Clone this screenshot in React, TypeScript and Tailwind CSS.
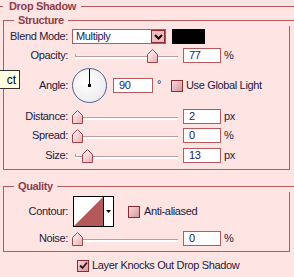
import React from 'react';

const line = 'border-[#b65a5e]';

const Thumb: React.FC = () => (
  <svg width="11" height="14" viewBox="0 0 11 14">
    <defs>
      <linearGradient id="tg" x1="0" y1="0" x2="1" y2="1">
        <stop offset="0" stopColor="#ffffff" />
        <stop offset="1" stopColor="#e9a9ad" />
      </linearGradient>
    </defs>
    <polygon points="0.5,5.5 5.5,0.5 10.5,5.5 10.5,13.5 0.5,13.5" fill="url(#tg)" stroke="#a3434b" />
  </svg>
);

const Slider: React.FC<{ pos: number }> = ({ pos }) => (
  <div className="relative w-[106px] h-[15px]">
    <div className="absolute left-[3px] right-0 top-[8px] h-[3px] border-t border-[#c29a9c] bg-white" />
    <div className="absolute left-[3px] top-[6px] w-[1px] h-[3px] bg-[#c29a9c]" />
    <div className="absolute top-[1px]" style={{ left: pos }}>
      <Thumb />
    </div>
  </div>
);

const NumBox: React.FC<{ value: string; w?: string }> = ({ value, w = 'w-[38px]' }) => (
  <div className={`${w} h-[15px] border ${line} bg-white pl-[5px] text-[#1a2166] leading-[13px]`}>{value}</div>
);

const Check: React.FC<{ checked?: boolean }> = ({ checked }) => (
  <div className="w-[12px] h-[12px] border border-[#8e2a32] bg-gradient-to-br from-[#f6dadd] to-[#d8959b] flex items-center justify-center">
    {checked && (
      <svg width="9" height="9" viewBox="0 0 9 9">
        <path d="M1 4.5 L3.5 7 L8 1.5" fill="none" stroke="#2a1a1a" strokeWidth="1.8" />
      </svg>
    )}
  </div>
);

const Label: React.FC<{ text: string }> = ({ text }) => (
  <div className="w-[64px] text-right shrink-0">{text}</div>
);

const Header: React.FC<{ title: string }> = ({ title }) => (
  <div className="flex h-[11px]">
    <div className={`w-[11px] mt-[5px] border-l border-t ${line}`} />
    <span className="px-[4px] font-bold text-[#8f3f4a] leading-[11px]">{title}</span>
    <div className={`flex-1 mt-[5px] border-t ${line}`} />
  </div>
);

const App: React.FC = () => {
  return (
    <div
      className="relative w-[294px] h-[277px] overflow-hidden bg-[#ffe4e4] text-[11px] tracking-[-0.35px] text-[#1b1b3b]"
      style={{ fontFamily: '"Liberation Sans", Arial, sans-serif' }}
    >
      <div className="flex items-center h-[12px]">
        <div className={`w-[3px] border-t ${line}`} />
        <span className="ml-[6px] mr-[5px] font-bold text-[#8f3f4a] leading-[11px]">Drop Shadow</span>
        <div className={`flex-1 border-t ${line}`} />
      </div>

      <div className="ml-[3px] mt-[3px]">
        <Header title="Structure" />
        <div className={`mr-[4px] border-l border-r border-b ${line} pt-[3px] pb-[6px] flex flex-col`}>
          <div className="flex items-center h-[15px]">
            <Label text="Blend Mode:" />
            <div className={`ml-[4px] w-[94px] h-[15px] border ${line} bg-white flex items-center`}>
              <span className="flex-1 pl-[3px] text-[#1a2166]">Multiply</span>
              <div className="w-[14px] h-[13px] border border-[#8e2a32] bg-[#efbcc0] flex items-center justify-center">
                <svg width="9" height="6" viewBox="0 0 9 6">
                  <path d="M1 1 L4.5 4.5 L8 1" fill="none" stroke="#000" strokeWidth="2" />
                </svg>
              </div>
            </div>
            <div className="ml-[6px] w-[33px] h-[15px] bg-black" />
          </div>

          <div className="flex items-center h-[15px] mt-[4px]">
            <Label text="Opacity:" />
            <div className="ml-[4px]"><Slider pos={75} /></div>
            <div className="ml-[5px]"><NumBox value="77" /></div>
            <span className="ml-[3px]">%</span>
          </div>

          <div className="flex items-center h-[35px] mt-[5px]">
            <Label text="Angle:" />
            <div className="ml-[4px] relative w-[35px] h-[35px] rounded-full border-[1.5px] border-[#51618a] bg-[radial-gradient(circle_at_40%_40%,#ffffff,#e6e6ea)]">
              <div className="absolute left-[16px] top-0 w-[1px] h-[16px] bg-black" />
              <div className="absolute left-[15px] top-[15px] w-[3px] h-[3px] bg-black" />
            </div>
            <div className="ml-[6px]"><NumBox value="90" w="w-[40px]" /></div>
            <span className="w-[18px] pl-[4px] self-start mt-[8px]">°</span>
            <Check />
            <span className="ml-[3px]">Use Global Light</span>
          </div>

          <div className="flex items-center h-[15px] mt-[6px]">
            <Label text="Distance:" />
            <div className="ml-[4px]"><Slider pos={0} /></div>
            <div className="ml-[5px]"><NumBox value="2" /></div>
            <span className="ml-[3px]">px</span>
          </div>

          <div className="flex items-center h-[15px] mt-[4px]">
            <Label text="Spread:" />
            <div className="ml-[4px]"><Slider pos={0} /></div>
            <div className="ml-[5px]"><NumBox value="0" /></div>
            <span className="ml-[3px]">%</span>
          </div>

          <div className="flex items-center h-[15px] mt-[5px]">
            <Label text="Size:" />
            <div className="ml-[4px]"><Slider pos={10} /></div>
            <div className="ml-[5px]"><NumBox value="13" /></div>
            <span className="ml-[3px]">px</span>
          </div>
        </div>
      </div>

      <div className="ml-[3px] mt-[11px]">
        <Header title="Quality" />
        <div className={`mr-[4px] border-l border-r border-b ${line} pt-[4px] pb-[5px] flex flex-col`}>
          <div className="flex items-center h-[31px]">
            <Label text="Contour:" />
            <div className="ml-[5px] w-[41px] h-[31px] border border-black bg-white flex">
              <svg width="29" height="29" viewBox="0 0 29 29" className="shrink-0">
                <polygon points="0,29 29,0 29,29" fill="#b4585c" />
              </svg>
              <div className="flex-1 border-l border-black flex items-center justify-center">
                <svg width="5" height="3" viewBox="0 0 5 3">
                  <polygon points="0,0 5,0 2.5,3" fill="#000" />
                </svg>
              </div>
            </div>
            <div className="ml-[14px]"><Check /></div>
            <span className="ml-[4px]">Anti-aliased</span>
          </div>

          <div className="flex items-center h-[15px] mt-[4px]">
            <Label text="Noise:" />
            <div className="ml-[4px]"><Slider pos={0} /></div>
            <div className="ml-[5px]"><NumBox value="0" /></div>
            <span className="ml-[3px]">%</span>
          </div>
        </div>
      </div>

      <div className="flex items-center mt-[7px] pl-[77px] h-[13px]">
        <Check checked />
        <span className="ml-[3px]">Layer Knocks Out Drop Shadow</span>
      </div>

      <div className="absolute left-[-20px] top-[70px] w-[40px] h-[19px] border border-[#333] bg-[#ffffe1] flex items-center justify-end pr-[3px] text-[12px] tracking-normal text-black">
        ct
      </div>
    </div>
  );
};

export default App;
